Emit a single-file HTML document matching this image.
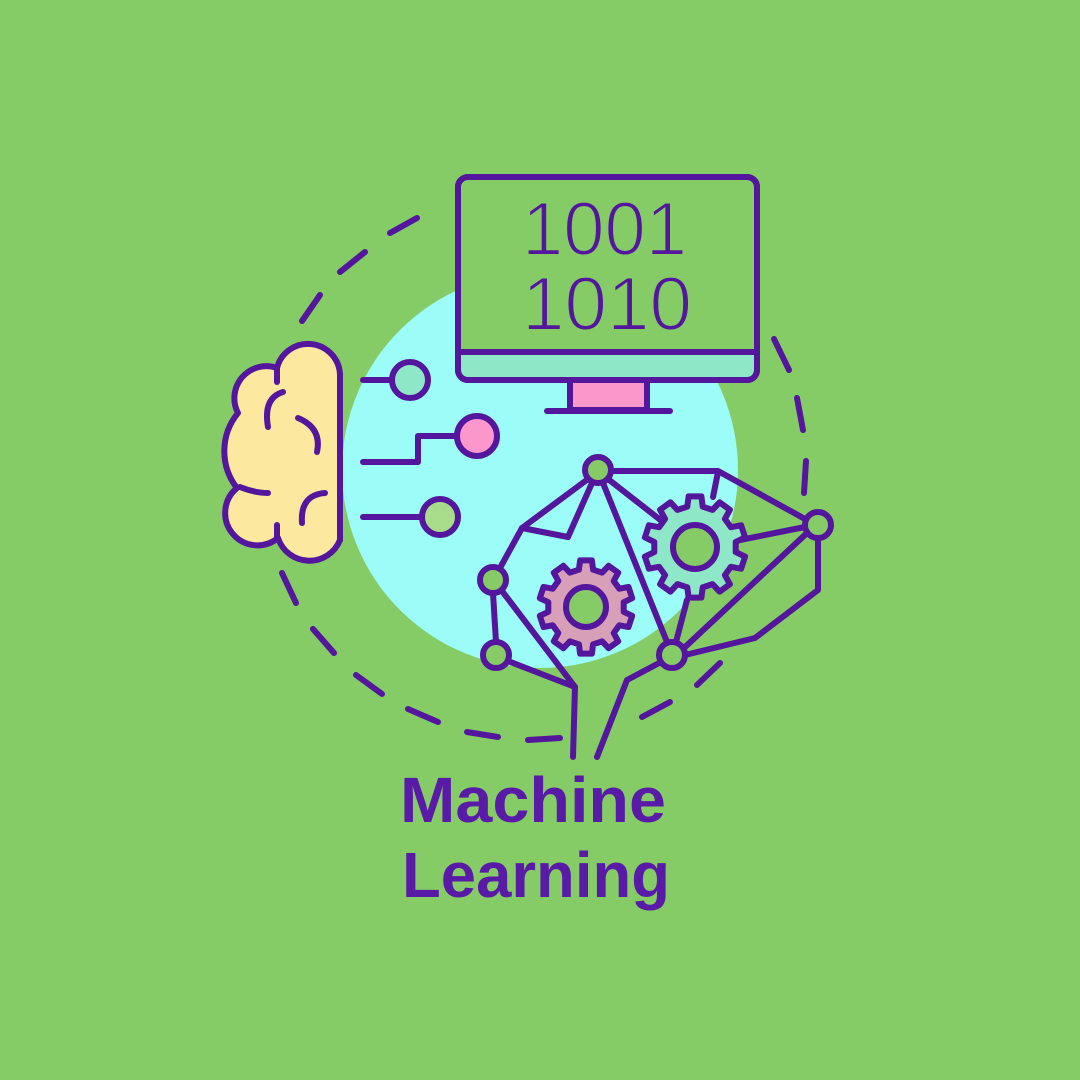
<!DOCTYPE html>
<html><head><meta charset="utf-8"><style>
html,body{margin:0;padding:0;background:#86cc66;}
svg{display:block}
</style></head><body>
<svg width="1080" height="1080" viewBox="0 0 1080 1080" xmlns="http://www.w3.org/2000/svg">
<rect width="1080" height="1080" fill="#86cc66"/>
<circle cx="540" cy="470" r="198" fill="#9cfcf8"/>
<g stroke="#53169c" stroke-width="6" stroke-linecap="round" stroke-linejoin="round" fill="none">
<line x1="417" y1="218" x2="390" y2="233"/>
<line x1="365" y1="252" x2="340" y2="272"/>
<line x1="320" y1="295" x2="302" y2="321"/>
<line x1="282" y1="573" x2="296" y2="603"/>
<line x1="313" y1="629" x2="334" y2="653"/>
<line x1="356" y1="675" x2="382" y2="694"/>
<line x1="408" y1="709" x2="438" y2="722"/>
<line x1="467" y1="732" x2="498" y2="737"/>
<line x1="528" y1="740" x2="560" y2="738"/>
<line x1="642" y1="717" x2="670" y2="702"/>
<line x1="697" y1="685" x2="720" y2="663"/>
<line x1="806" y1="461" x2="804" y2="493"/>
<line x1="797" y1="398" x2="803" y2="430"/>
<line x1="774" y1="339" x2="789" y2="370"/>
<rect x="458" y="177" width="299" height="203" rx="10" fill="#86cc66"/>
<path d="M461 352 H754 V370 a8 8 0 0 1 -8 8 H469 a8 8 0 0 1 -8 -8 Z" fill="#8ee8c8" stroke="none"/>
<line x1="458" y1="352" x2="757" y2="352"/>
<rect x="458" y="177" width="299" height="203" rx="10"/>
<rect x="570" y="380" width="77" height="30" fill="#fc97cc"/>
<line x1="547" y1="411" x2="670" y2="411"/>
<path d="M340,375 A32,32 0 0 0 277,368 A32,32 0 0 0 238,413 A60,60 0 0 0 237,488 A31,31 0 0 0 278,538 A33,33 0 0 0 340,540 Z" fill="#fde8a0"/>
<path d="M277,367 L277,382"/>
<path d="M283,392 Q263,398 268,427"/>
<path d="M298,418 Q322,428 317,452"/>
<path d="M240,487 Q255,493 268,493"/>
<path d="M325,493 Q300,495 302,523"/>
<path d="M277,525 L277,537"/>
<line x1="363" y1="380" x2="392" y2="380"/>
<circle cx="410" cy="380" r="18" fill="#8ee8c8"/>
<path d="M363,462 H418 V436 H456"/>
<circle cx="477" cy="436" r="20" fill="#fc97cc"/>
<line x1="363" y1="517" x2="420" y2="517"/>
<circle cx="440" cy="517" r="18" fill="#a9dc8a"/>
<path d="M611,471 H718 L805,519"/>
<path d="M718,472 L713,497"/>
<path d="M588,479 L522,528 L568,537 L592,483"/>
<path d="M522,528 L500,568"/>
<path d="M493,593 L496,642"/>
<path d="M502,591 L575,687 L508,661"/>
<path d="M575,687 L573,757"/>
<path d="M603,483 L667,642"/>
<path d="M608,479 L663,522"/>
<path d="M687,600 L676,642"/>
<path d="M684,648 L807,533"/>
<path d="M740,540 L805,527"/>
<path d="M818,538 V590 L755,638 L685,655"/>
<path d="M661,662 L627,680 L597,757"/>
<g id="gears"></g>
<circle cx="598" cy="470" r="13" fill="#86cc66"/>
<circle cx="818" cy="525" r="13" fill="#86cc66"/>
<circle cx="493" cy="580" r="13" fill="#86cc66"/>
<circle cx="496" cy="655" r="13" fill="#86cc66"/>
<circle cx="672" cy="655" r="13" fill="#86cc66"/>
</g>
<g font-family="'Liberation Sans', sans-serif" fill="#53169c" stroke="#86cc66" stroke-width="2">
<text x="522" y="255" font-size="76" textLength="165" lengthAdjust="spacingAndGlyphs">1001</text>
<text x="522" y="330" font-size="76" textLength="170" lengthAdjust="spacingAndGlyphs">1010</text>
</g>
<g font-family="'Liberation Sans', sans-serif" font-weight="bold" fill="#5a1aa8" font-size="64">
<text x="400" y="822" textLength="266" lengthAdjust="spacingAndGlyphs">Machine</text>
<text x="402" y="897" textLength="268" lengthAdjust="spacingAndGlyphs">Learning</text>
</g>
</svg>
<script>
function gear(cx,cy,ro,ri,n,hole,fill){
 var d="",step=2*Math.PI/n;
 for(var i=0;i<n;i++){
  var a=i*step-Math.PI/2;
  var pts=[[ri,a-step*0.3],[ro,a-step*0.2],[ro,a+step*0.2],[ri,a+step*0.3]];
  for(var j=0;j<4;j++){var x=cx+pts[j][0]*Math.cos(pts[j][1]),y=cy+pts[j][0]*Math.sin(pts[j][1]);
   d+=(i==0&&j==0?"M":"L")+x.toFixed(1)+","+y.toFixed(1);}
 }
 d+="Z";
 var ns="http://www.w3.org/2000/svg",g=document.getElementById("gears");
 var p=document.createElementNS(ns,"path");p.setAttribute("d",d);p.setAttribute("fill",fill);g.appendChild(p);
 var c=document.createElementNS(ns,"circle");c.setAttribute("cx",cx);c.setAttribute("cy",cy);c.setAttribute("r",hole);c.setAttribute("fill","#86cc66");g.appendChild(c);
}
gear(695,547,51,41,10,22,"#8ee8c8");
gear(586,607,47,38,10,20,"#d8a0b8");
</script>
</body></html>
